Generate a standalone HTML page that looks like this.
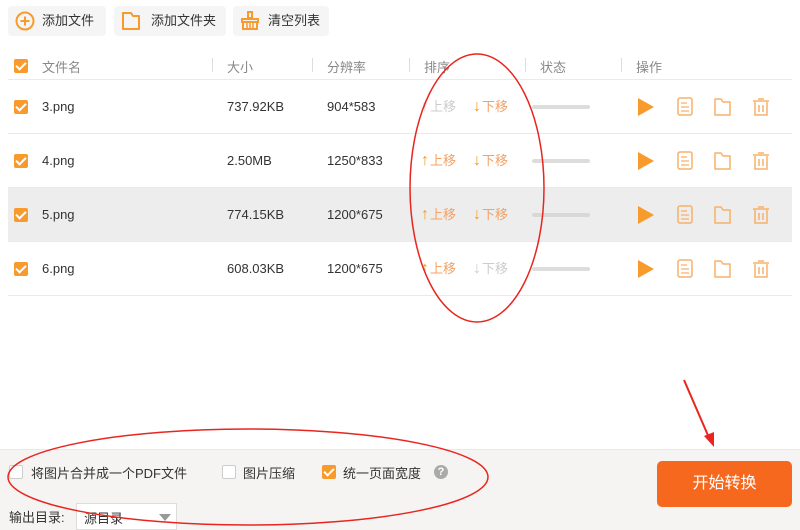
<!DOCTYPE html>
<html><head><meta charset="utf-8"><style>
*{margin:0;padding:0;box-sizing:border-box}
body{width:800px;height:530px;overflow:hidden;background:#fff;font-family:"Liberation Sans","Noto Sans CJK SC",sans-serif;color:#333;position:relative;font-size:13px}
.a{position:absolute}
.btn{position:absolute;top:6px;height:30px;background:#f5f5f5;border-radius:4px;font-size:13px;line-height:30px;color:#333}
.cb{position:absolute;width:14px;height:14px;background:#f89a2c;border-radius:2px}
.cb:after{content:"";position:absolute;left:4px;top:1px;width:4px;height:8px;border:solid #fff;border-width:0 2px 2px 0;transform:rotate(45deg)}
.ucb{position:absolute;width:14px;height:14px;border:1px solid #ccc;background:#fff;border-radius:2px}
.hd{color:#888;font-size:13px}
.sep{position:absolute;top:58px;width:1px;height:14px;background:#ddd}
.line{position:absolute;left:8px;width:784px;height:1px;background:#eaeaea}
.row{position:absolute;left:0;width:800px;height:54px}
.row .t{position:absolute;top:0;line-height:54px;font-size:13px;color:#333}
.mv{position:absolute;top:0;line-height:54px;font-size:13px}
.mv b{font-size:16px;font-weight:bold;margin-right:1px}
.on{color:#f7a060}.on b{color:#f59a23}
.off{color:#ccc}.off b{color:#ccc}
.bar{position:absolute;left:532px;top:25px;width:58px;height:4px;background:#ddd;border-radius:2px}
</style></head><body>
<div class="btn" style="left:8px;width:98px">
<svg class="a" style="left:7px;top:5px" width="20" height="20" viewBox="0 0 20 20"><circle cx="10" cy="10" r="8.5" fill="none" stroke="#f89a2c" stroke-width="2"/><path d="M10 5.5v9M5.5 10h9" stroke="#f89a2c" stroke-width="2"/></svg>
<span class="a" style="left:34px">添加文件</span></div>
<div class="btn" style="left:114px;width:112px">
<svg class="a" style="left:7px;top:5px" width="20" height="20" viewBox="0 0 20 20"><path d="M2 2h8l2 3h6v13H2z" fill="none" stroke="#f89a2c" stroke-width="2" stroke-linejoin="round"/></svg>
<span class="a" style="left:37px">添加文件夹</span></div>
<div class="btn" style="left:233px;width:96px">
<svg class="a" style="left:7px;top:5px" width="20" height="20" viewBox="0 0 20 20"><rect x="8" y="1" width="4" height="6" fill="none" stroke="#f89a2c" stroke-width="2"/><path d="M2 8h16v3H2zM3 11h14v7H3z" fill="none" stroke="#f89a2c" stroke-width="2"/><path d="M7 12v6M10 12v6M13 12v6" stroke="#f89a2c" stroke-width="1.5"/></svg>
<span class="a" style="left:35px">清空列表</span></div>

<div class="cb" style="left:14px;top:59px"></div>
<span class="a hd" style="left:42px;top:57px">文件名</span>
<div class="sep" style="left:212px"></div><span class="a hd" style="left:227px;top:57px">大小</span>
<div class="sep" style="left:312px"></div><span class="a hd" style="left:327px;top:57px">分辨率</span>
<div class="sep" style="left:409px"></div><span class="a hd" style="left:424px;top:57px">排序</span>
<div class="sep" style="left:525px"></div><span class="a hd" style="left:540px;top:57px">状态</span>
<div class="sep" style="left:621px"></div><span class="a hd" style="left:636px;top:57px">操作</span>
<div class="line" style="top:79px"></div>

<div class="a" style="left:8px;top:187px;width:784px;height:55px;background:#ededed"></div>

<div class="row" style="top:80px">
<div class="cb" style="left:14px;top:20px"></div><span class="t" style="left:42px">3.png</span><span class="t" style="left:227px">737.92KB</span><span class="t" style="left:327px">904*583</span>
<span class="mv off" style="left:421px"><b>↑</b>上移</span><span class="mv on" style="left:473px"><b>↓</b>下移</span><div class="bar"></div>
<svg class="a" style="left:636px;top:16px" width="140" height="22" viewBox="0 0 140 22"><path d="M2 2L18 11L2 20z" fill="#f89a2c"/><rect x="42" y="2" width="14" height="17" rx="2" fill="none" stroke="#f8b06a" stroke-width="1.5"/><path d="M45 7h6M45 11h8M45 15h8" stroke="#f8b06a" stroke-width="1.3"/><path d="M79 3h6l2 3h7v13H79z" fill="none" stroke="#f8b06a" stroke-width="1.5" stroke-linejoin="round"/><path d="M117 5h16M122 3h6M119 6v13h12V6M123 9v7M127 9v7" fill="none" stroke="#f8b06a" stroke-width="1.5"/></svg>
</div>
<div class="line" style="top:133px"></div>
<div class="row" style="top:134px">
<div class="cb" style="left:14px;top:20px"></div><span class="t" style="left:42px">4.png</span><span class="t" style="left:227px">2.50MB</span><span class="t" style="left:327px">1250*833</span>
<span class="mv on" style="left:421px"><b>↑</b>上移</span><span class="mv on" style="left:473px"><b>↓</b>下移</span><div class="bar"></div>
<svg class="a" style="left:636px;top:16px" width="140" height="22" viewBox="0 0 140 22"><path d="M2 2L18 11L2 20z" fill="#f89a2c"/><rect x="42" y="2" width="14" height="17" rx="2" fill="none" stroke="#f8b06a" stroke-width="1.5"/><path d="M45 7h6M45 11h8M45 15h8" stroke="#f8b06a" stroke-width="1.3"/><path d="M79 3h6l2 3h7v13H79z" fill="none" stroke="#f8b06a" stroke-width="1.5" stroke-linejoin="round"/><path d="M117 5h16M122 3h6M119 6v13h12V6M123 9v7M127 9v7" fill="none" stroke="#f8b06a" stroke-width="1.5"/></svg>
</div>
<div class="line" style="top:187px"></div>
<div class="row" style="top:188px">
<div class="cb" style="left:14px;top:20px"></div><span class="t" style="left:42px">5.png</span><span class="t" style="left:227px">774.15KB</span><span class="t" style="left:327px">1200*675</span>
<span class="mv on" style="left:421px"><b>↑</b>上移</span><span class="mv on" style="left:473px"><b>↓</b>下移</span><div class="bar" style="background:#d8d8d8"></div>
<svg class="a" style="left:636px;top:16px" width="140" height="22" viewBox="0 0 140 22"><path d="M2 2L18 11L2 20z" fill="#f89a2c"/><rect x="42" y="2" width="14" height="17" rx="2" fill="none" stroke="#f8b06a" stroke-width="1.5"/><path d="M45 7h6M45 11h8M45 15h8" stroke="#f8b06a" stroke-width="1.3"/><path d="M79 3h6l2 3h7v13H79z" fill="none" stroke="#f8b06a" stroke-width="1.5" stroke-linejoin="round"/><path d="M117 5h16M122 3h6M119 6v13h12V6M123 9v7M127 9v7" fill="none" stroke="#f8b06a" stroke-width="1.5"/></svg>
</div>
<div class="line" style="top:241px"></div>
<div class="row" style="top:242px">
<div class="cb" style="left:14px;top:20px"></div><span class="t" style="left:42px">6.png</span><span class="t" style="left:227px">608.03KB</span><span class="t" style="left:327px">1200*675</span>
<span class="mv on" style="left:421px"><b>↑</b>上移</span><span class="mv off" style="left:473px"><b>↓</b>下移</span><div class="bar"></div>
<svg class="a" style="left:636px;top:16px" width="140" height="22" viewBox="0 0 140 22"><path d="M2 2L18 11L2 20z" fill="#f89a2c"/><rect x="42" y="2" width="14" height="17" rx="2" fill="none" stroke="#f8b06a" stroke-width="1.5"/><path d="M45 7h6M45 11h8M45 15h8" stroke="#f8b06a" stroke-width="1.3"/><path d="M79 3h6l2 3h7v13H79z" fill="none" stroke="#f8b06a" stroke-width="1.5" stroke-linejoin="round"/><path d="M117 5h16M122 3h6M119 6v13h12V6M123 9v7M127 9v7" fill="none" stroke="#f8b06a" stroke-width="1.5"/></svg>
</div>
<div class="line" style="top:295px"></div>

<div class="a" style="left:0;top:449px;width:800px;height:81px;background:#f5f4f3;border-top:1px solid #e8e8e8"></div>
<div class="ucb" style="left:9px;top:465px"></div><span class="a" style="left:31px;top:463px">将图片合并成一个PDF文件</span>
<div class="ucb" style="left:222px;top:465px"></div><span class="a" style="left:243px;top:463px">图片压缩</span>
<div class="cb" style="left:322px;top:465px"></div><span class="a" style="left:343px;top:463px">统一页面宽度</span>
<div class="a" style="left:434px;top:465px;width:14px;height:14px;border-radius:7px;background:#aaa;color:#fff;font-size:11px;line-height:14px;text-align:center;font-weight:bold">?</div>
<span class="a" style="left:9px;top:507px">输出目录:</span>
<div class="a" style="left:76px;top:503px;width:101px;height:27px;background:#fff;border:1px solid #ddd"><span class="a" style="left:7px;top:4px">源目录</span><div class="a" style="left:82px;top:10px;border-left:6px solid transparent;border-right:6px solid transparent;border-top:7px solid #999"></div></div>
<div class="a" style="left:657px;top:461px;width:135px;height:46px;background:#f7681f;border-radius:5px;color:#fff;font-size:16px;line-height:46px;text-align:center">开始转换</div>

<svg class="a" style="left:0;top:0" width="800" height="530">
<ellipse cx="477" cy="188" rx="67" ry="134" fill="none" stroke="#e8261f" stroke-width="1.5"/>
<ellipse cx="248" cy="477" rx="240" ry="48" fill="none" stroke="#e8261f" stroke-width="1.5"/>
<path d="M684 380L710 440" stroke="#e8261f" stroke-width="2"/>
<path d="M704 436L714 447L714 432z" fill="#e8261f"/>
</svg>
</body></html>
